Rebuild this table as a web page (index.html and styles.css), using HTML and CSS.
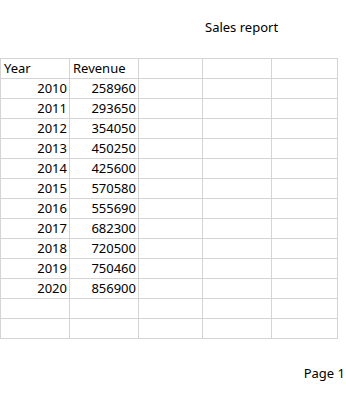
FILE: index.html
```html
<!DOCTYPE html>
<html>
<head>
<meta charset="utf-8">
<link rel="stylesheet" href="styles.css">
</head>
<body>
<div class="page">
  <header class="title-area"><span class="title">Sales report</span></header>
  <table class="sheet">
    <colgroup>
      <col class="c1"><col class="c2"><col class="c3"><col class="c4"><col class="c5">
    </colgroup>
    <tbody>
      <tr><td>Year</td><td>Revenue</td><td></td><td></td><td></td></tr>
      <tr><td class="num">2010</td><td class="num">258960</td><td></td><td></td><td></td></tr>
      <tr><td class="num">2011</td><td class="num">293650</td><td></td><td></td><td></td></tr>
      <tr><td class="num">2012</td><td class="num">354050</td><td></td><td></td><td></td></tr>
      <tr><td class="num">2013</td><td class="num">450250</td><td></td><td></td><td></td></tr>
      <tr><td class="num">2014</td><td class="num">425600</td><td></td><td></td><td></td></tr>
      <tr><td class="num">2015</td><td class="num">570580</td><td></td><td></td><td></td></tr>
      <tr><td class="num">2016</td><td class="num">555690</td><td></td><td></td><td></td></tr>
      <tr><td class="num">2017</td><td class="num">682300</td><td></td><td></td><td></td></tr>
      <tr><td class="num">2018</td><td class="num">720500</td><td></td><td></td><td></td></tr>
      <tr><td class="num">2019</td><td class="num">750460</td><td></td><td></td><td></td></tr>
      <tr><td class="num">2020</td><td class="num">856900</td><td></td><td></td><td></td></tr>
      <tr><td></td><td></td><td></td><td></td><td></td></tr>
      <tr><td></td><td></td><td></td><td></td><td></td></tr>
    </tbody>
  </table>
  <footer class="footer"><span>Page 1</span></footer>
</div>
</body>
</html>
```
FILE: styles.css
```css
html, body {
  margin: 0;
  padding: 0;
  background: #ffffff;
}
.page {
  width: 346px;
  height: 393px;
  font-family: "Noto Sans", "Open Sans", sans-serif;
  font-size: 13px;
  color: #000000;
  display: flex;
  flex-direction: column;
}
.title-area {
  height: 58px;
  box-sizing: border-box;
  padding-left: 205px;
  padding-top: 18px;
  line-height: 18px;
}
.sheet {
  border-collapse: collapse;
  table-layout: fixed;
  width: 338px;
}
.c1 { width: 69px; }
.c2 { width: 69px; }
.c3 { width: 64px; }
.c4 { width: 69px; }
.c5 { width: 66px; }
.sheet td {
  border: 1px solid #d4d4d4;
  height: 19px;
  padding: 0 3px;
  line-height: 19px;
  vertical-align: bottom;
  white-space: nowrap;
  overflow: hidden;
}
.sheet td.num {
  text-align: right;
  padding-right: 2px;
}
.footer {
  display: flex;
  justify-content: flex-end;
  padding-top: 25px;
  padding-right: 1px;
  line-height: 18px;
}
```
